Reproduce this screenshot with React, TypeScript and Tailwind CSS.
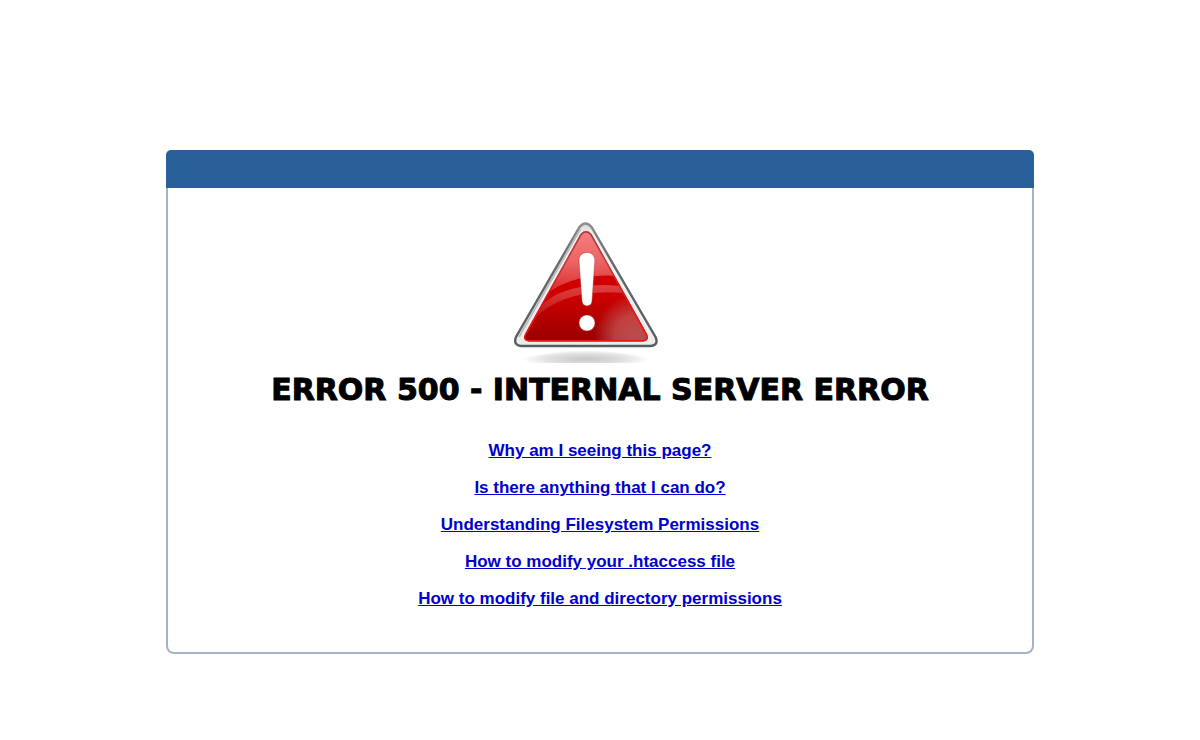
import React from 'react';

interface HelpLink {
  label: string;
  href: string;
}

const helpLinks: HelpLink[] = [
  { label: 'Why am I seeing this page?', href: '#why' },
  { label: 'Is there anything that I can do?', href: '#what-can-i-do' },
  { label: 'Understanding Filesystem Permissions', href: '#permissions' },
  { label: 'How to modify your .htaccess file', href: '#htaccess' },
  { label: 'How to modify file and directory permissions', href: '#modify-permissions' }
];

const WarningIcon: React.FC = () => (
  <svg viewBox="14 12 144 144" className="w-36 h-36 mr-7" role="img" aria-label="Warning">
    <defs>
      <linearGradient id="rim" x1="0" y1="0" x2="0" y2="1">
        <stop offset="0" stopColor="#8c8c8c" />
        <stop offset="0.3" stopColor="#646a6c" />
        <stop offset="1" stopColor="#565c5e" />
      </linearGradient>
      <linearGradient id="frame" x1="0" y1="0" x2="0" y2="1">
        <stop offset="0" stopColor="#d6d6d6" />
        <stop offset="0.1" stopColor="#f4f4f4" />
        <stop offset="1" stopColor="#ececec" />
      </linearGradient>
      <linearGradient id="red" x1="0" y1="0" x2="0" y2="1">
        <stop offset="0" stopColor="#dd0000" />
        <stop offset="0.6" stopColor="#cc0000" />
        <stop offset="1" stopColor="#960000" />
      </linearGradient>
      <linearGradient id="edge" x1="0" y1="21" x2="0" y2="132" gradientUnits="userSpaceOnUse">
        <stop offset="0" stopColor="#a03c3c" />
        <stop offset="0.3" stopColor="#c43c3c" />
        <stop offset="0.6" stopColor="#dd1414" />
        <stop offset="1" stopColor="#f01414" />
      </linearGradient>
      <linearGradient id="gloss" x1="0" y1="21" x2="0" y2="98" gradientUnits="userSpaceOnUse">
        <stop offset="0" stopColor="#ff9c9c" stopOpacity="0.8" />
        <stop offset="0.4" stopColor="#f49090" stopOpacity="0.7" />
        <stop offset="0.75" stopColor="#f49090" stopOpacity="0.35" />
        <stop offset="1" stopColor="#f49090" stopOpacity="0.1" />
      </linearGradient>
      <linearGradient id="band" x1="0" y1="74" x2="0" y2="108" gradientUnits="userSpaceOnUse">
        <stop offset="0" stopColor="#fff" stopOpacity="0.26" />
        <stop offset="1" stopColor="#fff" stopOpacity="0.08" />
      </linearGradient>
      <radialGradient id="glow" cx="136" cy="126" r="42" gradientUnits="userSpaceOnUse">
        <stop offset="0" stopColor="#d08080" stopOpacity="0.6" />
        <stop offset="0.5" stopColor="#d08080" stopOpacity="0.5" />
        <stop offset="1" stopColor="#d08080" stopOpacity="0" />
      </radialGradient>
      <radialGradient id="shadow">
        <stop offset="0" stopColor="#000" stopOpacity="0.22" />
        <stop offset="0.6" stopColor="#000" stopOpacity="0.12" />
        <stop offset="1" stopColor="#000" stopOpacity="0" />
      </radialGradient>
      <clipPath id="inner">
        <path d="M80.500 24 Q86 18 91.500 24 L147 124 Q150 131 143 131.500 L29 131.500 Q22 131 25 124 Z" />
      </clipPath>
      <clipPath id="ground">
        <path d="M20 153 L20 149 Q86 132 152 149 L152 153 Z" />
      </clipPath>
    </defs>

    <ellipse cx="86" cy="149" rx="64" ry="9" fill="url(#shadow)" clipPath="url(#ground)" />

    {/* Metal frame */}
    <path
      d="M79.500 17 Q85.500 10 91.500 17 L155.500 127 Q159 135 151 136 L21 136 Q13 135 16 127 Z"
      fill="url(#frame)"
      stroke="url(#rim)"
      strokeWidth="2.400"
    />
    <path d="M80.500 19 L19 127" stroke="#b9b9b9" strokeWidth="1.600" />

    {/* Red glass */}
    <g clipPath="url(#inner)">
      <rect x="20" y="18" width="132" height="115" fill="url(#red)" />
      <path d="M20 112 Q50 66 105 65.500 L124 66 L110 18 L20 18 Z" fill="url(#gloss)" />
      <path d="M33 106 Q52 75 105 75 L121 76 L125 83 Q65 78 35 108 Z" fill="url(#band)" />
      <rect x="80" y="80" width="72" height="52" fill="url(#glow)" />
      <path
        d="M80.500 24 Q86 18 91.500 24 L147 124 Q150 131 143 131.500 L29 131.500 Q22 131 25 124 Z"
        fill="none"
        stroke="url(#edge)"
        strokeWidth="3"
      />
    </g>

    {/* Exclamation mark */}
    <g fill="#fff" stroke="#a82020" strokeOpacity="0.5" strokeWidth="0.8">
      <path d="M87 42.500 C92 42.500 95 46 94.800 51 L92 91 C91.500 97.500 82.500 97.500 82 91 L79 51 C78.800 46 82 42.500 87 42.500 Z" />
      <circle cx="87" cy="113" r="8" />
    </g>
  </svg>
);

const App: React.FC = () => {
  return (
    <div className="min-h-screen bg-white px-4 pt-[150px] pb-20 font-['Liberation_Sans',Arial,sans-serif]">
      <main className="mx-auto w-full max-w-[868px]">
        <div className="h-[38px] rounded-t-[5px] bg-[#2a6099]" />

        <div className="flex flex-col items-center rounded-b-lg border-x-2 border-b-2 border-[#a3b3cc] px-4 pt-[34px] pb-[43px] text-center">
          <WarningIcon />
          {/* Stroke thickens the bold face to a black weight */}
          <h1 className="font-['DejaVu_Sans',sans-serif] text-[30px] leading-12 font-bold text-black [-webkit-text-stroke:1px_black]">
            ERROR 500 - INTERNAL SERVER ERROR
          </h1>
          <ul className="mt-[27px] flex flex-col gap-[17px]">
            {helpLinks.map(link => (
              <li key={link.href} className="text-[17px] leading-5 font-bold">
                <a href={link.href} className="text-[#0000cc] underline">
                  {link.label}
                </a>
              </li>
            ))}
          </ul>
        </div>
      </main>
    </div>
  );
};

export default App;
